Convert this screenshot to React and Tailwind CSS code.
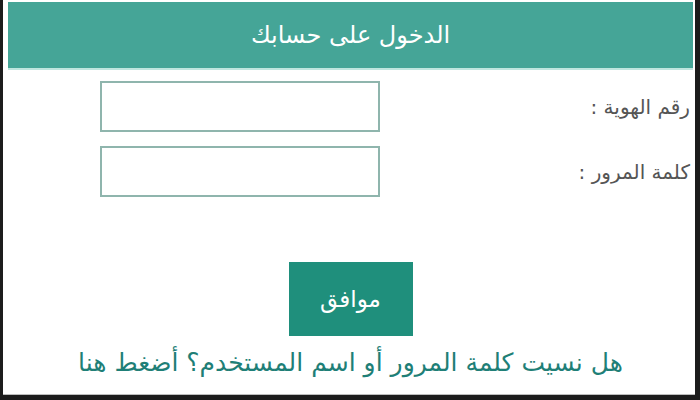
import React from 'react';

const arabic = { fontFamily: '"DejaVu Sans", "Noto Sans", sans-serif' };

const Field = ({ label, type }) => (
    <div dir="rtl" className="flex items-center h-[51px]">
        <label className="w-[313px] pr-[3px] text-[20px] text-[#555555]" style={arabic}>{label}</label>
        <input type={type} className="w-[280px] h-[51px] border-2 border-[#8fb5ad] bg-white outline-none" />
    </div>
);

const App = () => {
    return (
        <div className="w-[700px] h-[400px] bg-[#1c1c1c] pl-[3px] pr-[5px] pb-[5px] overflow-hidden">
            <div className="w-full h-full bg-white pt-[2px] pl-[5px] pr-[2px] border-b border-[#bdbdbd]" style={arabic}>
                <div className="h-[68px] bg-[#45a597] border-b-2 border-[#bfe6df] flex items-center justify-center">
                    <h1 className="text-white text-[24px]" dir="rtl">الدخول على حسابك</h1>
                </div>

                <div className="pt-[11px] flex flex-col gap-[14px]">
                    <Field label="رقم الهوية :" type="text" />
                    <Field label="كلمة المرور :" type="password" />
                </div>

                <div className="flex justify-center mt-[65px]">
                    <button className="w-[124px] h-[74px] bg-[#1f8f7c] text-white text-[23px]" dir="rtl">موافق</button>
                </div>

                <div className="text-center mt-[8px]" dir="rtl">
                    <a href="#" className="text-[25px] text-[#1f7f77]">هل نسيت كلمة المرور أو اسم المستخدم؟ أضغط هنا</a>
                </div>
            </div>
        </div>
    );
};

export default App;
